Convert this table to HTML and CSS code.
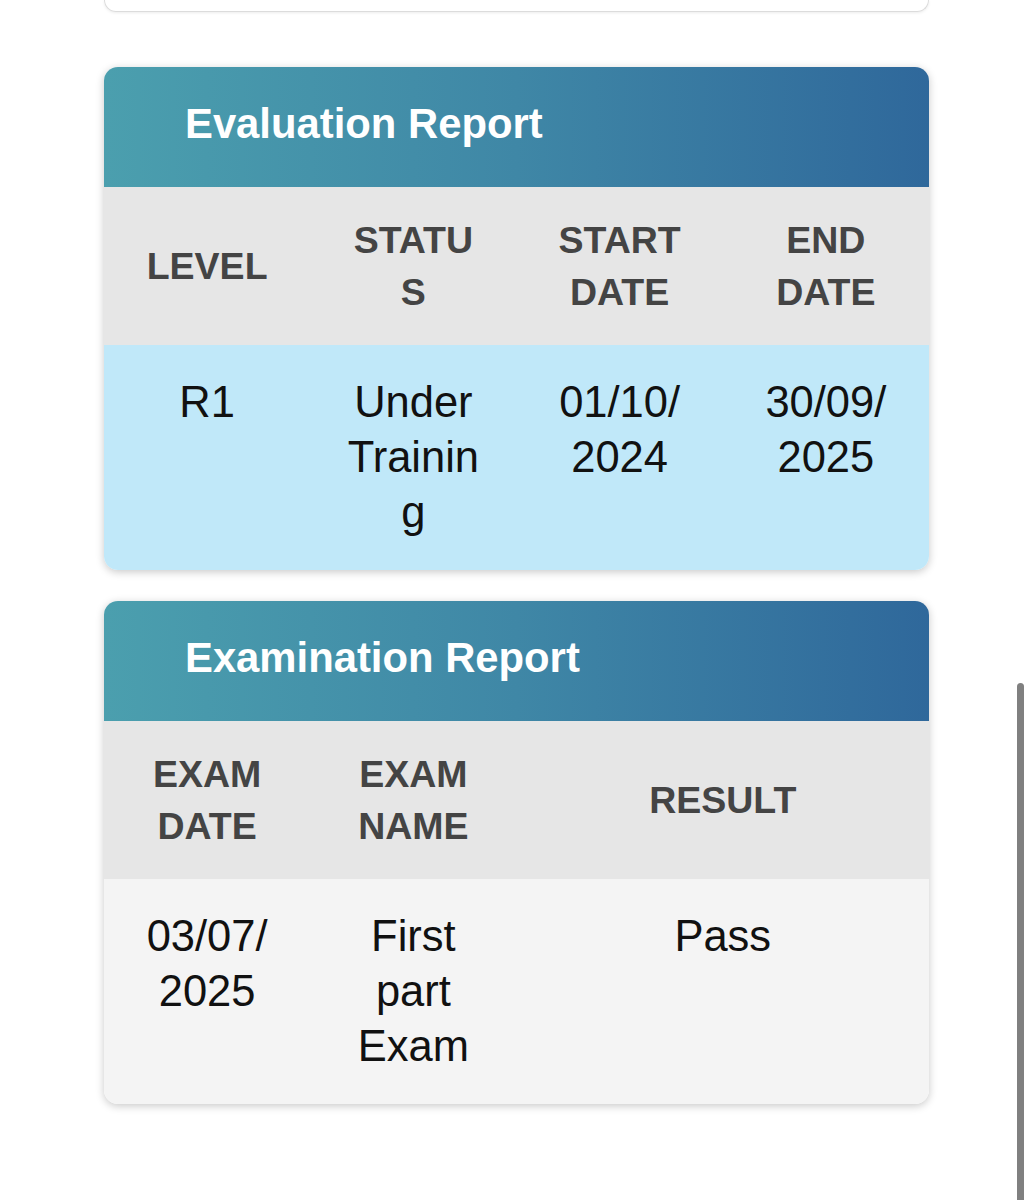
FILE: index.html
```
<!DOCTYPE html>
<html lang="en">
<head>
<meta charset="utf-8">
<title>Reports</title>
<link rel="stylesheet" href="styles.css">
</head>
<body>
<div class="page">
  <div class="prev-card"></div>

  <section class="card">
    <header class="card-head">Evaluation Report</header>
    <table class="report">
      <colgroup><col class="c25"><col class="c25"><col class="c25"><col class="c25"></colgroup>
      <thead>
        <tr><th>LEVEL</th><th>STATUS</th><th>START DATE</th><th>END DATE</th></tr>
      </thead>
      <tbody>
        <tr class="row-blue"><td>R1</td><td>Under Training</td><td>01/10/2024</td><td>30/09/2025</td></tr>
      </tbody>
    </table>
  </section>

  <section class="card">
    <header class="card-head">Examination Report</header>
    <table class="report">
      <colgroup><col class="c25"><col class="c25"><col class="c50"></colgroup>
      <thead>
        <tr><th>EXAM DATE</th><th>EXAM NAME</th><th>RESULT</th></tr>
      </thead>
      <tbody>
        <tr class="row-grey"><td>03/07/2025</td><td>First part Exam</td><td>Pass</td></tr>
      </tbody>
    </table>
  </section>
</div>
<div class="scrollbar"></div>
</body>
</html>
```
FILE: styles.css
```
html, body {
  margin: 0;
  padding: 0;
  background: #ffffff;
  font-family: "Liberation Sans", Arial, Helvetica, sans-serif;
}

.page {
  padding: 0 104px 96px;
  display: flex;
  flex-direction: column;
  gap: 31px;
}

.prev-card {
  height: 11px;
  border: 1px solid #dcdcdc;
  border-top: none;
  border-radius: 0 0 12px 12px;
  box-shadow: 0 1px 3px rgba(0, 0, 0, 0.08);
  margin-bottom: 24px;
}

.card {
  border-radius: 14px;
  overflow: hidden;
  box-shadow: 0 2px 9px rgba(0, 0, 0, 0.22);
  background: #fff;
}

.card-head {
  height: 120px;
  box-sizing: border-box;
  padding-bottom: 6px;
  display: flex;
  align-items: center;
  padding-left: 81px;
  color: #ffffff;
  font-weight: 700;
  font-size: 41.8px;
  background: linear-gradient(90deg, #4b9fae 0%, #3f87a6 50%, #2f689b 100%);
}

.report {
  width: 100%;
  border-collapse: collapse;
  table-layout: fixed;
}

.c25 { width: 25%; }
.c50 { width: 50%; }

.report th {
  background: #e6e6e6;
  color: #444444;
  font-weight: 700;
  font-size: 37.5px;
  line-height: 52px;
  padding: 27px 33px;
  text-align: center;
  vertical-align: middle;
  overflow-wrap: anywhere;
}

.report td {
  color: #111111;
  font-size: 43.5px;
  line-height: 55px;
  padding: 30px 33px 30px;
  text-align: center;
  vertical-align: top;
  overflow-wrap: anywhere;
}

.row-blue td { background: #c0e8f9; }
.row-grey td { background: #f4f4f4; }

.scrollbar {
  position: fixed;
  top: 683px;
  right: 9px;
  width: 7px;
  height: 530px;
  border-radius: 4px;
  background: #808080;
}
```
